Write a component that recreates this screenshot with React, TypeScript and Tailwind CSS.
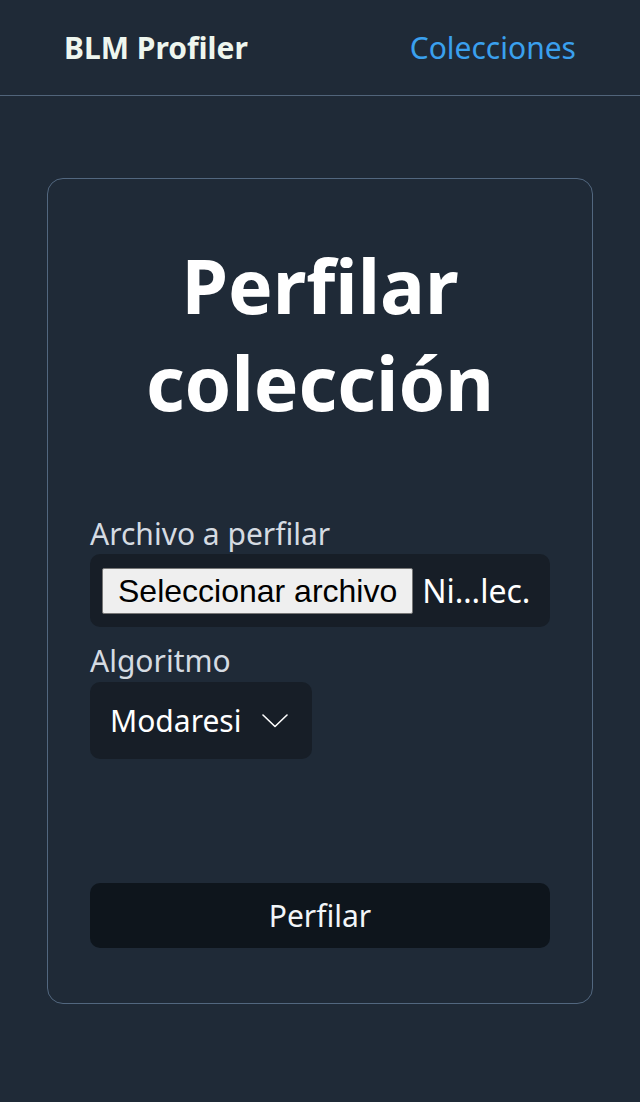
const font = { fontFamily: '"Noto Sans", "Open Sans", sans-serif' };

export default function App() {
  return (
    <div className="min-h-[1102px] bg-[#1f2a37] text-[#e6ebf0]" style={font}>
      <header className="h-[96px] flex items-center justify-between px-[64px] border-b border-[#51647a]">
        <span className="text-[30px] font-bold text-[#eef6ee]">BLM Profiler</span>
        <a className="text-[30px] text-[#3aa0ee]">Colecciones</a>
      </header>

      <main className="px-[47px] pt-[82px]">
        <div className="border border-[#52677f] rounded-[16px] px-[42px] pt-[58px] pb-[55px]">
          <h1 className="text-center text-[75px] leading-[97px] font-bold text-white">
            Perfilar
            <br />
            colección
          </h1>

          <div className="mt-[85px]">
            <label className="block text-[30px] leading-[36px] text-[#d5dbe2]">
              Archivo a perfilar
            </label>
            <div className="mt-[2px] h-[73px] bg-[#171e27] rounded-[10px] flex items-center pl-[12px] gap-[9px]">
              <span
                className="h-[46px] px-[15px] flex items-center bg-[#efefef] border border-[#767676] rounded-[2px] text-[32px] text-black whitespace-nowrap"
                style={{ fontFamily: '"Liberation Sans", Arial, sans-serif' }}
              >
                Seleccionar archivo
              </span>
              <span className="text-[32px] text-white whitespace-nowrap">Ni…lec.</span>
            </div>
          </div>

          <div className="mt-[16px]">
            <label className="block text-[30px] leading-[36px] text-[#d5dbe2]">
              Algoritmo
            </label>
            <div className="mt-[3px] w-[222px] h-[77px] bg-[#171e27] rounded-[10px] flex items-center justify-between pl-[20px] pr-[24px]">
              <span className="text-[30px] text-white">Modaresi</span>
              <svg width="26" height="14" viewBox="0 0 26 14" fill="none">
                <polyline
                  points="1,1 13,12.5 25,1"
                  stroke="white"
                  strokeWidth="1.6"
                  strokeLinecap="round"
                  strokeLinejoin="round"
                />
              </svg>
            </div>
          </div>

          <button className="mt-[124px] w-full h-[65px] bg-[#0e151c] rounded-[10px] text-[30px] text-[#f2f5f8]">
            Perfilar
          </button>
        </div>
      </main>
    </div>
  );
}
